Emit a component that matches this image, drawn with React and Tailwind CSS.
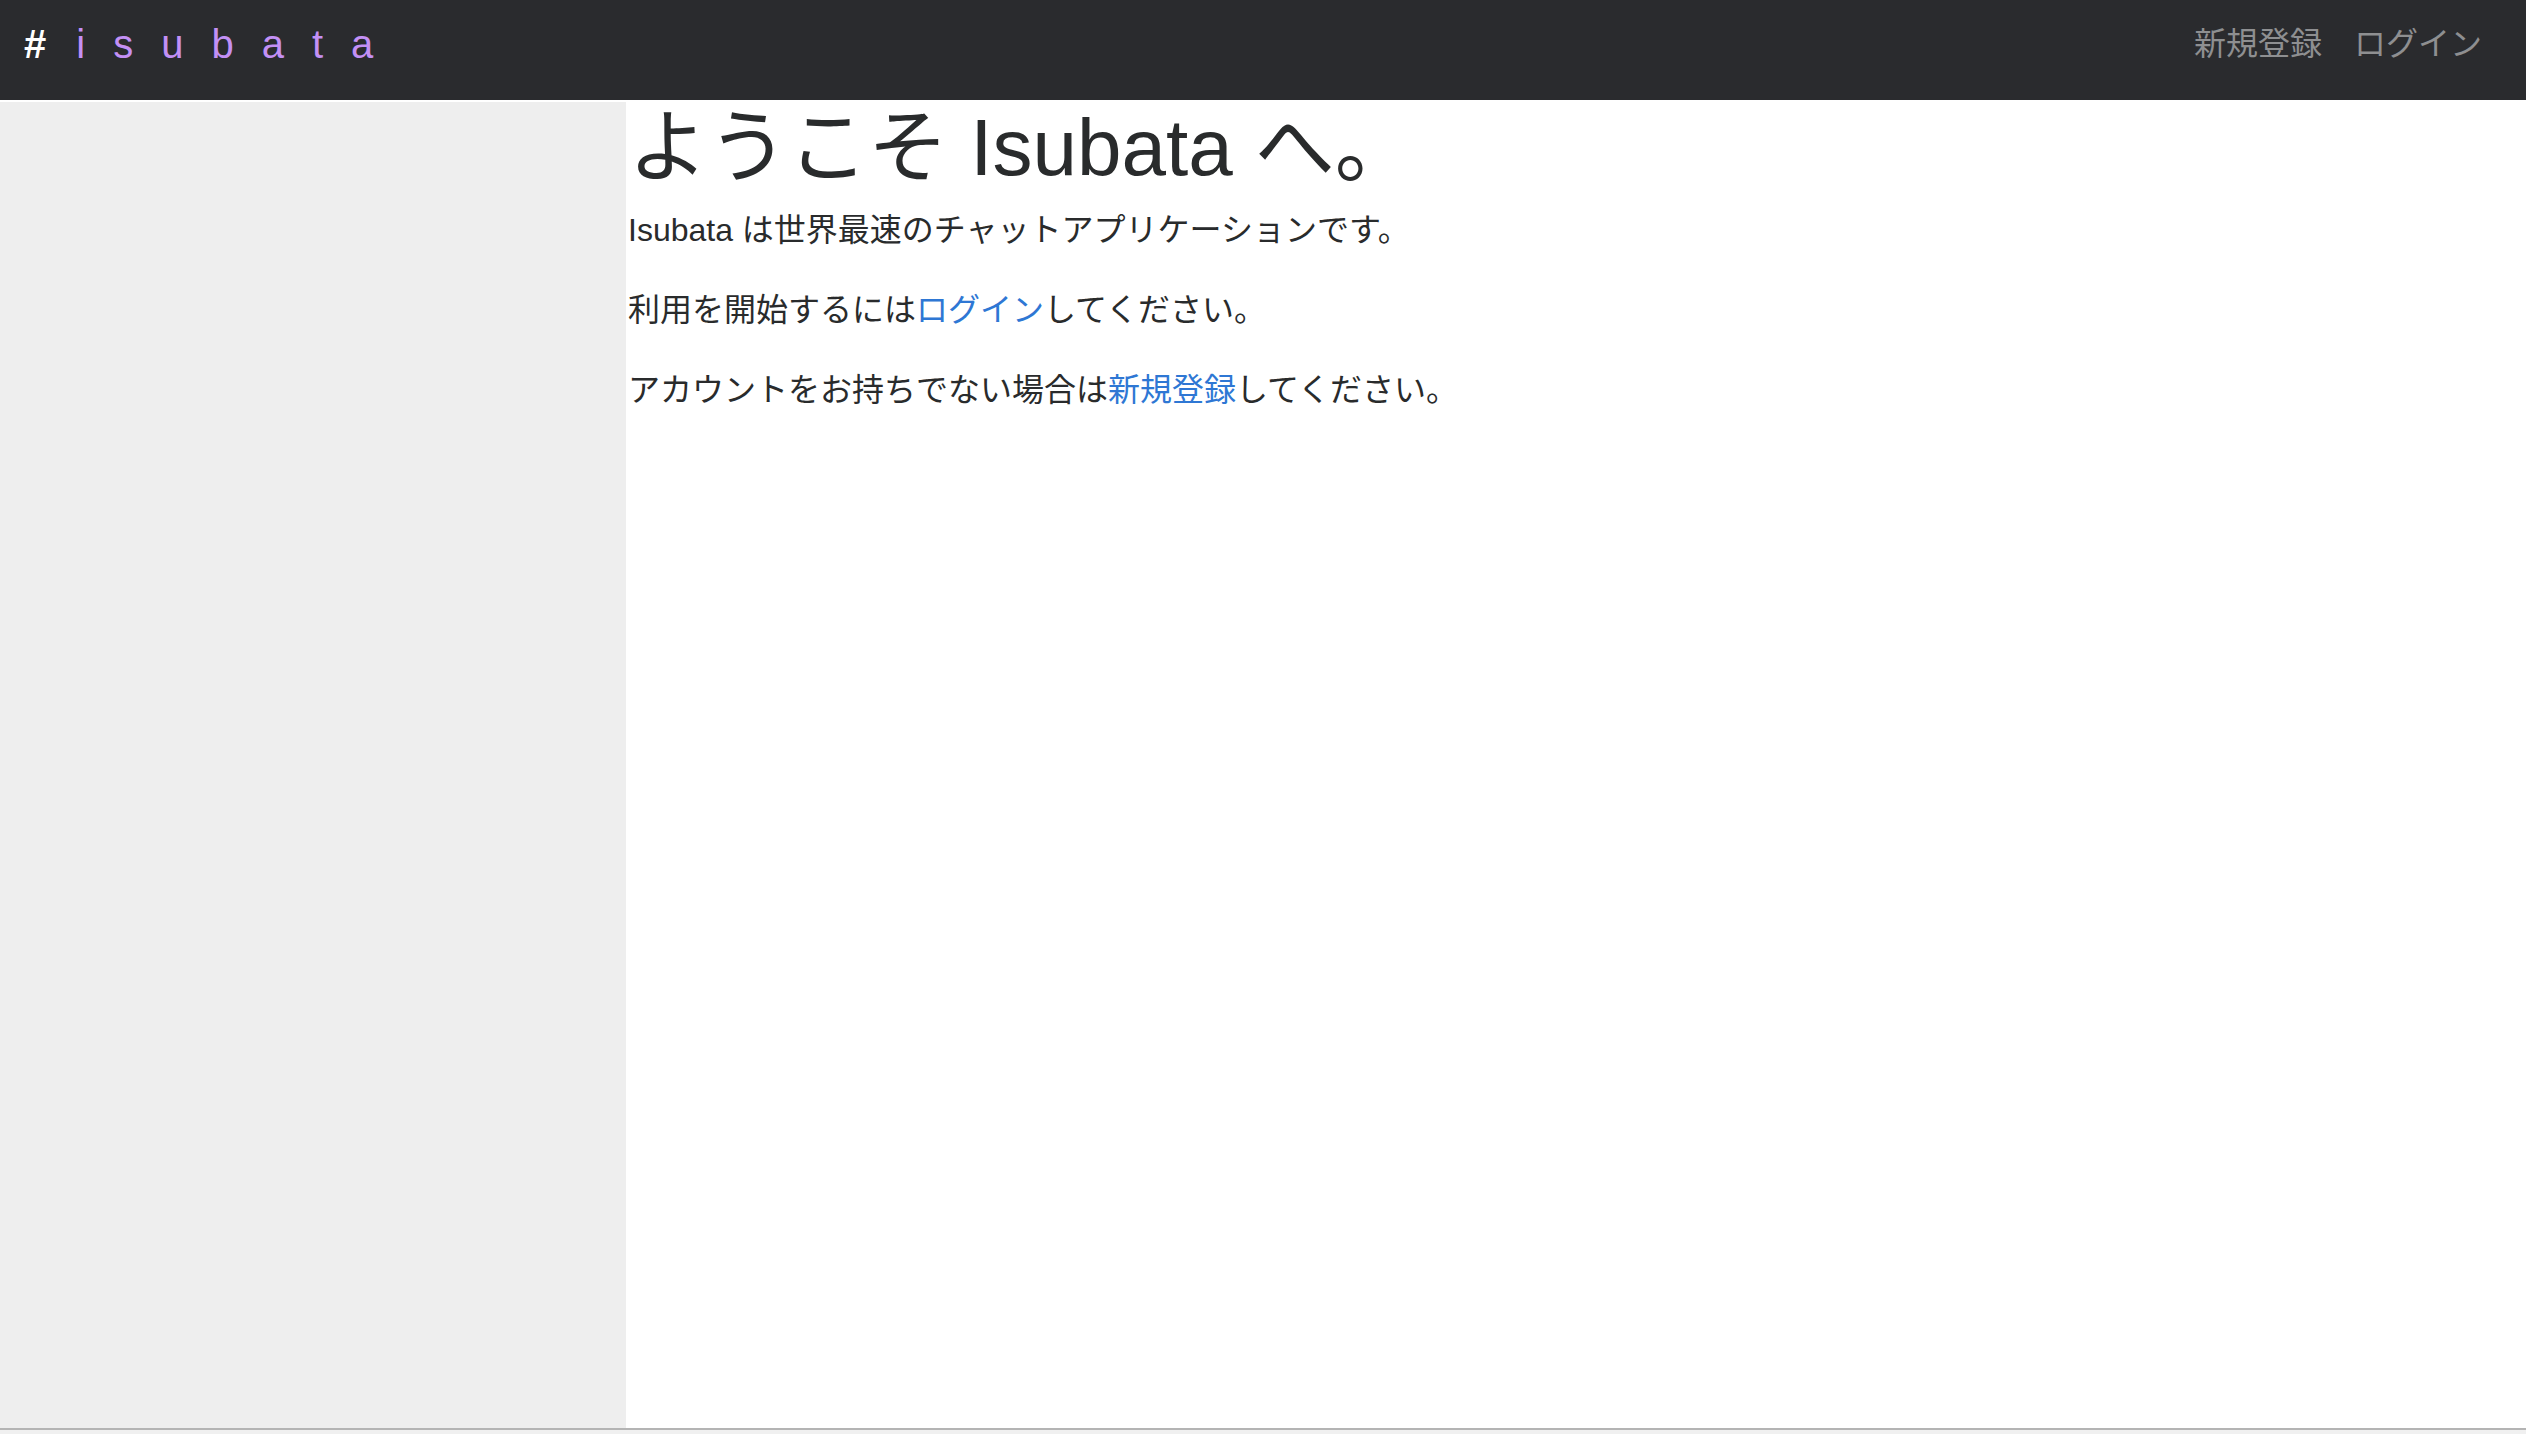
export default function App() {
  const font = { fontFamily: '"Liberation Sans", "Noto Sans CJK JP", sans-serif' };
  return (
    <div className="flex h-[1434px] w-full flex-col bg-[#f0f0f0] text-[#292b2c]" style={font}>
      <nav className="flex h-[100px] shrink-0 items-center justify-between bg-[#2a2b2e] pb-[12px] pl-[24px] pr-[28px]">
        <a className="flex items-center text-[40px] leading-none">
          <span className="font-bold text-white">#</span>
          <span className="ml-[30px] tracking-[28px] text-[#c390f5]">isubata</span>
        </a>
        <div className="flex items-center text-[32px] leading-none text-[#8e8f91]">
          <a className="px-[16px]">新規登録</a>
          <a className="px-[16px]">ログイン</a>
        </div>
      </nav>
      <div className="mb-[4px] flex flex-1 border-b-2 border-t-2 border-b-[#b4b4b4] border-t-white">
        <aside className="w-[626px] shrink-0 bg-[#eeeeee]" />
        <main className="flex-1 bg-white pl-[2px]">
          <h1 className="mb-[10px] mt-[-2px] text-[80px] font-normal leading-[1.2]">ようこそ Isubata へ。</h1>
          <p className="mb-[32px] text-[32px] leading-[1.5]">Isubata は世界最速のチャットアプリケーションです。</p>
          <p className="mb-[32px] text-[32px] leading-[1.5]">
            利用を開始するには<a className="text-[#2e77d4]">ログイン</a>してください。
          </p>
          <p className="mb-[32px] text-[32px] leading-[1.5]">
            アカウントをお持ちでない場合は<a className="text-[#2e77d4]">新規登録</a>してください。
          </p>
        </main>
      </div>
    </div>
  );
}
